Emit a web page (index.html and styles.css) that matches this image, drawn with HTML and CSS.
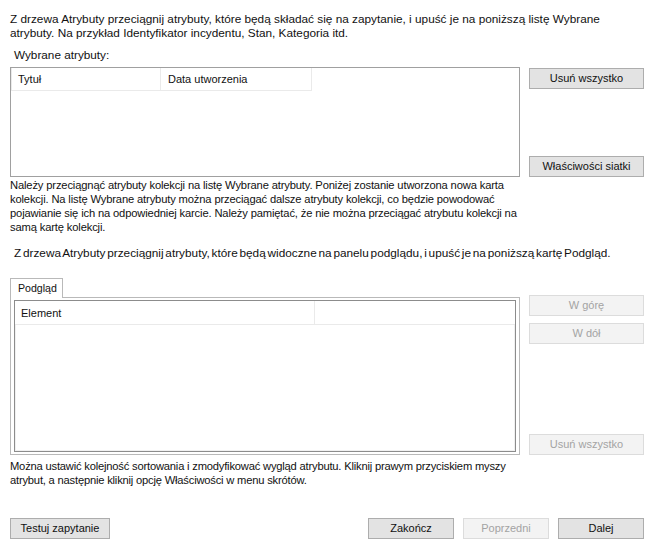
FILE: index.html
```html
<!DOCTYPE html>
<html lang="pl">
<head>
<meta charset="utf-8">
<link rel="stylesheet" href="styles.css">
</head>
<body>
<div class="page">
  <p class="intro">Z drzewa Atrybuty przeciągnij atrybuty, które będą składać się na zapytanie, i upuść je na poniższą listę Wybrane<br>atrybuty. Na przykład Identyfikator incydentu, Stan, Kategoria itd.</p>
  <div class="label">Wybrane atrybuty:</div>
  <div class="row sel-row">
    <div class="listbox sel-list">
      <div class="lv-header">
        <div class="lv-col c1">Tytuł</div>
        <div class="lv-col c2">Data utworzenia</div>
      </div>
    </div>
    <div class="btn-col spread">
      <button class="btn side">Usuń wszystko</button>
      <button class="btn side">Właściwości siatki</button>
    </div>
  </div>
  <p class="para2">Należy przeciągnąć atrybuty kolekcji na listę Wybrane atrybuty. Poniżej zostanie utworzona nowa karta<br>kolekcji. Na listę Wybrane atrybuty można przeciągać dalsze atrybuty kolekcji, co będzie powodować<br>pojawianie się ich na odpowiedniej karcie. Należy pamiętać, że nie można przeciągać atrybutu kolekcji na<br>samą kartę kolekcji.</p>
  <p class="preview-note">Z drzewa Atrybuty przeciągnij atrybuty, które będą widoczne na panelu podglądu, i upuść je na poniższą kartę Podgląd.</p>
  <div class="row prev-row">
    <div class="tabs">
      <div class="tab-strip"><div class="tab">Podgląd</div></div>
      <div class="tab-page">
        <div class="listbox inner-list">
          <div class="lv-header">
            <div class="lv-col e1">Element</div>
            <div class="lv-col e2"></div>
          </div>
        </div>
      </div>
    </div>
    <div class="btn-col prev-btns">
      <button class="btn side disabled">W górę</button>
      <button class="btn side disabled">W dół</button>
      <button class="btn side disabled last">Usuń wszystko</button>
    </div>
  </div>
  <p class="para3">Można ustawić kolejność sortowania i zmodyfikować wygląd atrybutu. Kliknij prawym przyciskiem myszy<br>atrybut, a następnie kliknij opcję Właściwości w menu skrótów.</p>
  <div class="footer">
    <button class="btn test">Testuj zapytanie</button>
    <div class="nav">
      <button class="btn navb">Zakończ</button>
      <button class="btn navb disabled">Poprzedni</button>
      <button class="btn navb">Dalej</button>
    </div>
  </div>
</div>
</body>
</html>
```
FILE: styles.css
```css
* { box-sizing: border-box; }
html, body {
  margin: 0;
  padding: 0;
  background: #ffffff;
}
body {
  font-family: "Liberation Sans", Arial, sans-serif;
  font-size: 11px;
  line-height: 14px;
  color: #111111;
}
.page {
  width: 655px;
  height: 550px;
  padding: 12px 11px 0 10px;
  display: flex;
  flex-direction: column;
}
p { margin: 0; }
.intro {
  font-size: 11.8px;
}
.label {
  margin-top: 8px;
  padding-left: 4px;
  font-size: 11.75px;
}
.row {
  display: flex;
  gap: 9px;
}
.sel-row {
  margin-top: 5px;
  height: 110px;
}
.listbox {
  background: #fff;
  border: 1px solid #a0a0a0;
}
.sel-list {
  width: 511px;
  height: 110px;
}
.lv-header {
  display: flex;
  height: 23px;
  border-bottom: 1px solid #eaeaea;
  background: #fff;
}
.sel-list .lv-header {
  width: 301px;
  box-shadow: inset 1px 0 0 #eaeaea;
}
.lv-col {
  padding-left: 7px;
  line-height: 22px;
  border-right: 1px solid #eaeaea;
}
.c1 { width: 150px; }
.c2 { width: 151px; }
.btn-col {
  display: flex;
  flex-direction: column;
  width: 115px;
}
.spread {
  justify-content: space-between;
  padding-top: 1px;
}
.btn {
  font: inherit;
  font-size: 11px;
  line-height: 19px;
  height: 21px;
  padding: 0;
  color: #111111;
  background: #e3e3e3;
  border: 1px solid #adadad;
  border-radius: 0;
  text-align: center;
}
.btn.side { width: 115px; }
.btn.disabled {
  color: #a3a3a3;
  background: #f3f3f3;
  border-color: #dcdcdc;
}
.para2 {
  margin-top: 1px;
  font-size: 11.2px;
  letter-spacing: -0.15px;
}
.preview-note {
  margin-top: 12px;
  padding-left: 4px;
  font-size: 11.8px;
  word-spacing: -1.5px;
}
.prev-row {
  margin-top: 18px;
}
.tabs {
  width: 510px;
  display: flex;
  flex-direction: column;
}
.tab-strip {
  display: flex;
  height: 20px;
}
.tab {
  width: 53px;
  height: 20px;
  border: 1px solid #b9b9b9;
  border-bottom: none;
  background: #fff;
  padding-left: 7px;
  line-height: 19px;
  font-size: 10.6px;
  position: relative;
  z-index: 1;
}
.tab-page {
  margin-top: -1px;
  height: 158px;
  border: 1px solid #b9b9b9;
  padding: 2px 3px 2px 3px;
  background: #fff;
}
.inner-list {
  height: 152px;
  border: 1px solid #8c8c8c;
  box-shadow: inset 0 0 0 1px #f0f0f0;
}
.inner-list .lv-header {
  height: 24px;
}
.e1 {
  width: 300px;
  padding-left: 6px;
  line-height: 24px;
}
.e2 {
  flex: 1;
  border-right: none;
}
.prev-btns {
  padding-top: 17px;
}
.prev-btns .btn + .btn { margin-top: 7px; }
.prev-btns .last { margin-top: auto !important; }
.para3 {
  margin-top: 4px;
  font-size: 11.2px;
  letter-spacing: -0.2px;
}
.footer {
  margin-top: 31px;
  display: flex;
  justify-content: space-between;
  align-items: flex-start;
}
.btn.test { width: 100px; }
.nav {
  display: flex;
  gap: 9px;
}
.btn.navb { width: 86px; }
```
